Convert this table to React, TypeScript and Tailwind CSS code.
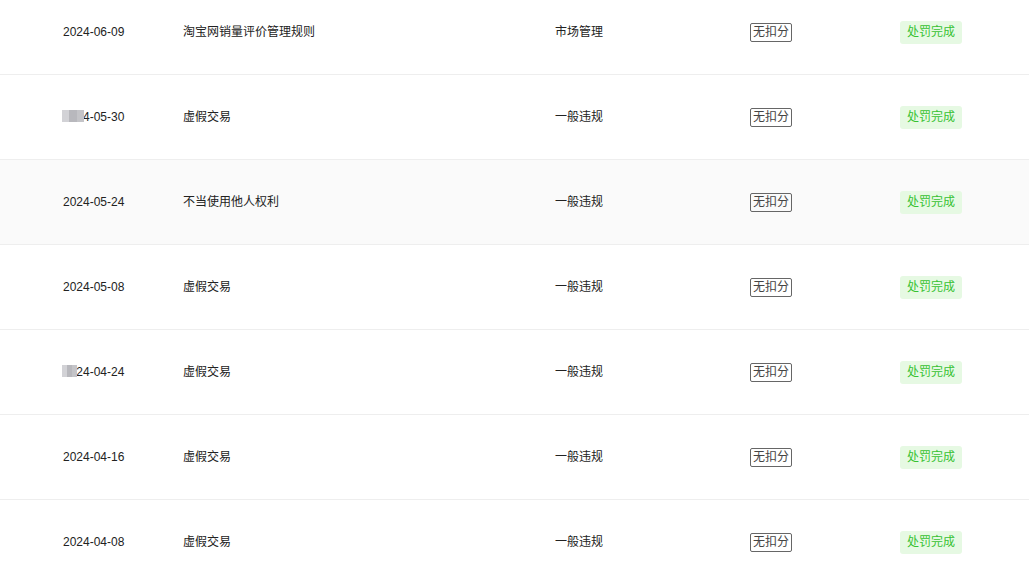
import React from "react";

type Row = {
  date: string;
  title: string;
  type: string;
  mask?: number;
  active?: boolean;
};

const rows: Row[] = [
  { date: "2024-06-09", title: "淘宝网销量评价管理规则", type: "市场管理" },
  { date: "2024-05-30", title: "虚假交易", type: "一般违规", mask: 22 },
  { date: "2024-05-24", title: "不当使用他人权利", type: "一般违规", active: true },
  { date: "2024-05-08", title: "虚假交易", type: "一般违规" },
  { date: "2024-04-24", title: "虚假交易", type: "一般违规", mask: 15 },
  { date: "2024-04-16", title: "虚假交易", type: "一般违规" },
  { date: "2024-04-08", title: "虚假交易", type: "一般违规" },
];

function PunishRow({ row }: { row: Row }) {
  return (
    <div
      className={`flex items-center h-[85px] border-b border-[#eeeeee] text-[12px] text-[#222] ${
        row.active ? "bg-[#fafafa]" : "bg-white"
      }`}
    >
      <div className="relative w-[120px] pl-[63px] box-content shrink-0">
        <span>{row.date}</span>
        {row.mask ? (
          <span
            className="absolute left-[62px] top-[2px] h-[12px] flex"
            style={{ width: row.mask }}
          >
            <span className="flex-1 bg-[#d2d2d6]" />
            <span className="flex-1 bg-[#b8b8bd]" />
            <span className="flex-1 bg-[#c4c4c8]" />
          </span>
        ) : null}
      </div>
      <div className="w-[372px] shrink-0">{row.title}</div>
      <div className="w-[195px] shrink-0">{row.type}</div>
      <div className="w-[150px] shrink-0">
        <span className="inline-block border border-[#666] rounded-[2px] px-[2px] leading-[17px] text-[#444]">
          无扣分
        </span>
      </div>
      <div className="shrink-0">
        <span className="inline-block rounded-[3px] bg-[#e6f9e3] px-[7px] leading-[23px] text-[#36c232]">
          处罚完成
        </span>
      </div>
    </div>
  );
}

export default function App() {
  return (
    <div
      className="w-[1029px] h-[570px] overflow-hidden bg-white"
      style={{ fontFamily: '"Liberation Sans", "Noto Sans CJK SC", sans-serif' }}
    >
      <div className="-mt-[10px]">
        {rows.map((row, i) => (
          <PunishRow key={i} row={row} />
        ))}
      </div>
    </div>
  );
}
